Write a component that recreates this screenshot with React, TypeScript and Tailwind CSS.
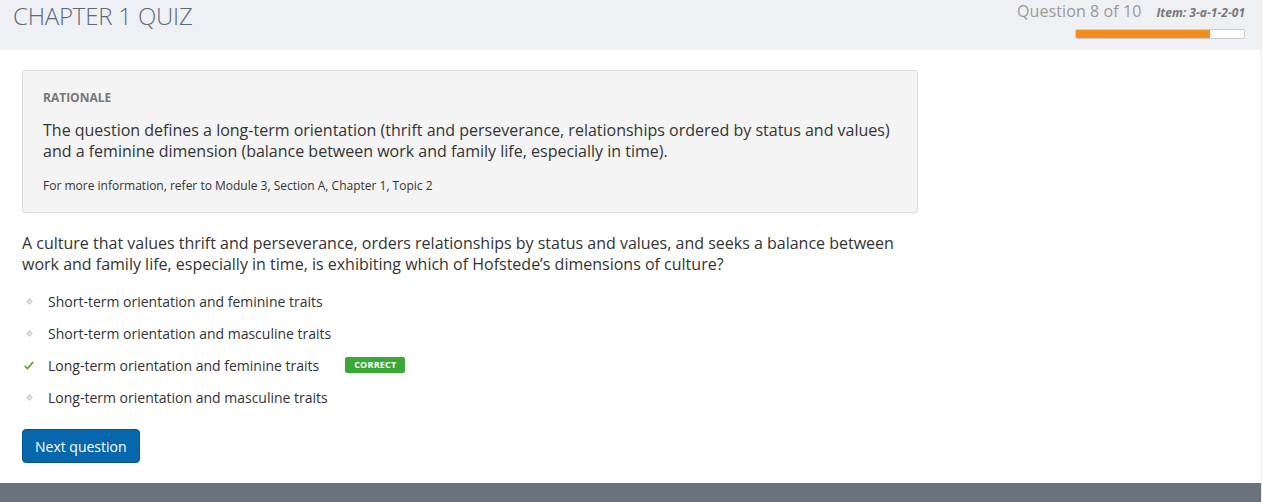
import React from 'react';

const options = [
  { text: 'Short-term orientation and feminine traits', correct: false },
  { text: 'Short-term orientation and masculine traits', correct: false },
  { text: 'Long-term orientation and feminine traits', correct: true },
  { text: 'Long-term orientation and masculine traits', correct: false },
];

const Bullet = () => (
  <svg width="7" height="7" viewBox="0 0 7 7" className="text-[#c8c8c8]">
    <path d="M3.5 0 L5 2 L7 3.5 L5 5 L3.5 7 L2 5 L0 3.5 L2 2 Z" fill="currentColor" />
    <circle cx="3.5" cy="3.5" r="1" fill="#fff" />
  </svg>
);

const Check = () => (
  <svg width="13" height="11" viewBox="0 0 13 11">
    <path d="M1 6 L4.5 9.5 L12 1" fill="none" stroke="#5a9e2f" strokeWidth="2.2" />
  </svg>
);

const App = () => {
  return (
    <div className="h-[502px] flex flex-col bg-white font-['Open_Sans',sans-serif] border-r border-[#e8e8e8]">
      <header className="h-[50px] shrink-0 bg-[#eff0f4] flex justify-between pl-[13px] pr-[16px]">
        <h1 className="text-[24px] font-light text-[#5c6b79] leading-[34px] mt-[-1px] tracking-[-0.2px]">
          CHAPTER 1 QUIZ
        </h1>
        <div className="flex flex-col items-end pt-[1px]">
          <div className="flex items-baseline gap-[15px]">
            <span className="text-[16px] text-[#999] leading-[20px] tracking-[0.1px]">Question 8 of 10</span>
            <span className="text-[12px] font-bold italic text-[#777]">Item: 3-a-1-2-01</span>
          </div>
          <div className="mt-[7px] w-[170px] h-[10px] border border-[#ccc] bg-white rounded-[2px] overflow-hidden">
            <div className="h-full bg-[#f28e1e]" style={{ width: `${(8 / 10) * 100}%` }} />
          </div>
        </div>
      </header>

      <main className="flex-1 px-[22px] pt-[20px]">
        <div className="w-[896px] bg-[#f4f4f4] border border-[#dcdcdc] rounded-[3px] px-[20px] pt-[19px] pb-[18px]">
          <div className="text-[12px] font-bold text-[#777] leading-[16px]">RATIONALE</div>
          <p className="mt-[14px] text-[16px] text-[#333] leading-[21px]">
            The question defines a long-term orientation (thrift and perseverance, relationships ordered by status and values)
            and a feminine dimension (balance between work and family life, especially in time).
          </p>
          <p className="mt-[16px] text-[12px] text-[#333] leading-[16px]">
            For more information, refer to Module 3, Section A, Chapter 1, Topic 2
          </p>
        </div>

        <p className="mt-[20px] w-[890px] text-[16px] text-[#333] leading-[21px]">
          A culture that values thrift and perseverance, orders relationships by status and values, and seeks a balance between
          work and family life, especially in time, is exhibiting which of Hofstede’s dimensions of culture?
        </p>

        <ul className="mt-[10px] flex flex-col">
          {options.map((o, i) => (
            <li key={i} className="h-[32px] flex items-center">
              <span className="w-[26px] flex justify-center pr-[14px] pl-[2px]">
                {o.correct ? <Check /> : <Bullet />}
              </span>
              <span className="text-[14px] text-[#333]">{o.text}</span>
              {o.correct && (
                <span className="ml-[26px] h-[16px] px-[9px] rounded-[2px] bg-[#3aa834] text-white text-[9px] font-bold tracking-[0.2px] flex items-center">
                  CORRECT
                </span>
              )}
            </li>
          ))}
        </ul>

        <button className="mt-[16px] h-[34px] px-[12px] bg-[#0767ad] border border-[#05558f] rounded-[4px] text-white text-[14px]">
          Next question
        </button>
      </main>

      <footer className="h-[19px] shrink-0 bg-[#6b747c]" />
    </div>
  );
};

export default App;
